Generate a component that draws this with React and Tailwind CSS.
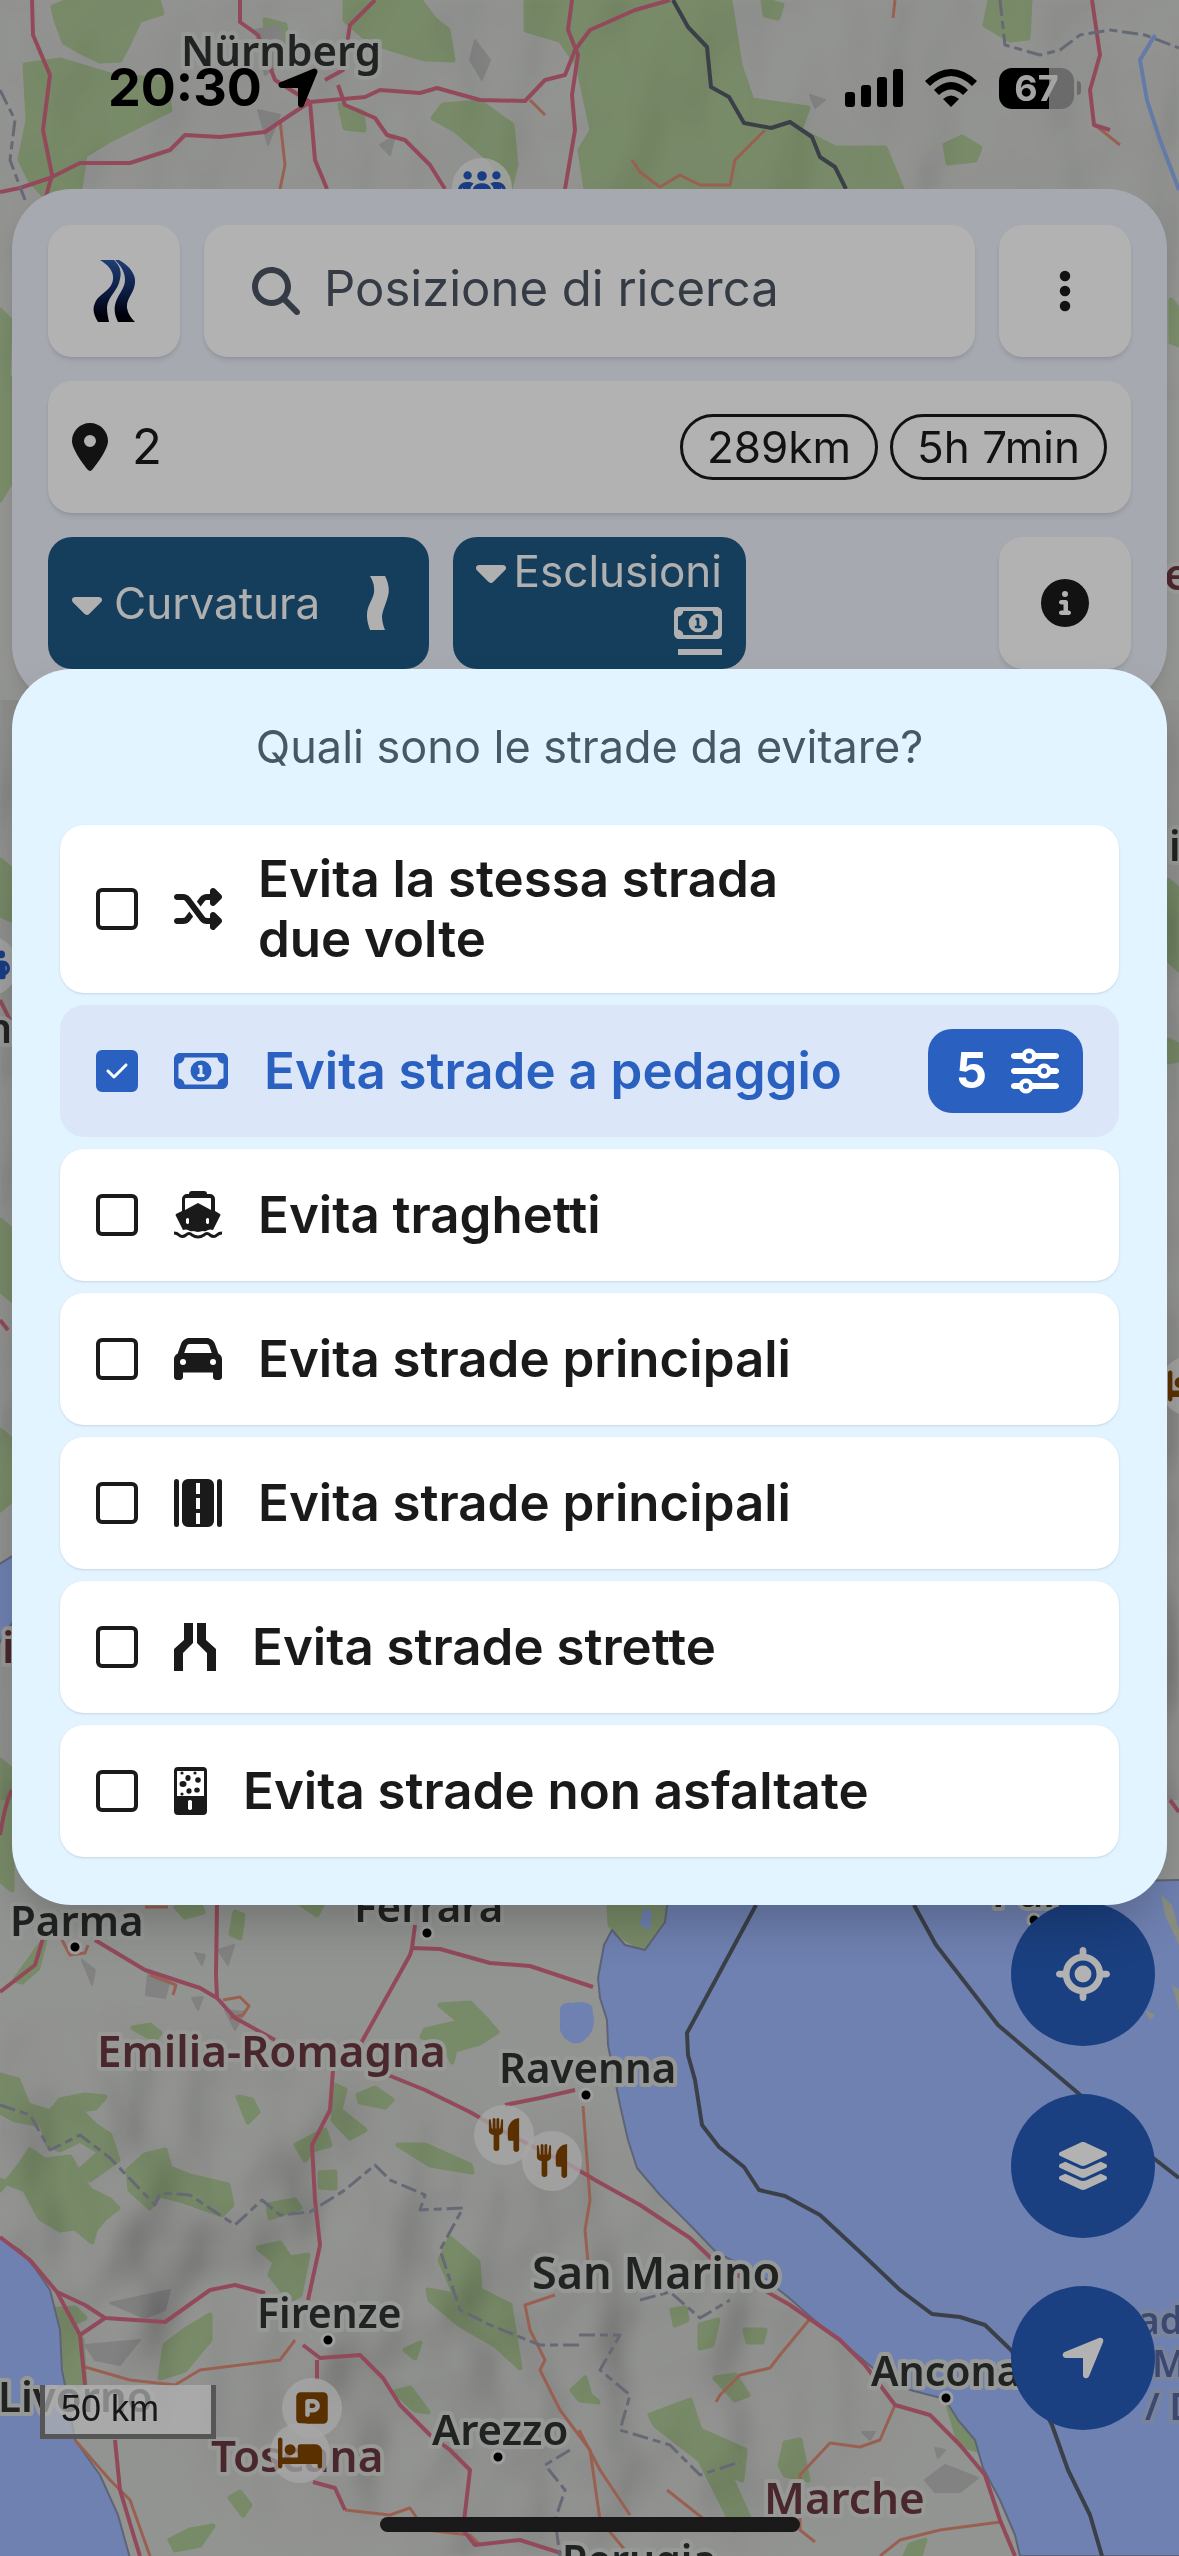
import { useState } from "react";
import {
	FaBed,
	FaCar,
	FaCaretDown,
	FaCheck,
	FaCircleInfo,
	FaEllipsisVertical,
	FaLayerGroup,
	FaLocationArrow,
	FaLocationCrosshairs,
	FaLocationDot,
	FaMagnifyingGlass,
	FaPeopleGroup,
	FaRegMoneyBill1,
	FaShuffle,
	FaSliders,
	FaSquareParking,
} from "react-icons/fa6";

function FerryIcon({ className }) {
	return (
		<svg viewBox="0 0 48 48" className={className} fill="currentColor">
			<path
				fillRule="evenodd"
				d="M15 3a3 3 0 0 1 3-3h12a3 3 0 0 1 3 3h3a5 5 0 0 1 5 5v12l5 3q1 1 0 2l-7 14q-3-1-5 0-3 2-5 1l-5 1-5-1q-2 1-5-1-2-1-5 0L2 25q-1-1 0-2l6-3V8a5 5 0 0 1 5-5h2zm-4 5v11l13-7 13 7V8q0-1-1-1H12q-1 0-1 1zm1 20v4q2 2 3 0v-4q-1-2-3 0zm20 0v4q2 2 3 0v-4q-1-2-3 0z"
			/>
			<path
				d="M0 42q3 0 5 2 3 3 7 0 3-3 6 0 6 4 12 0 3-3 6 0 4 3 7 0 2-2 5-2"
				fill="none"
				stroke="currentColor"
				strokeWidth="3"
			/>
		</svg>
	);
}

function MotorwayIcon({ className }) {
	return (
		<svg viewBox="0 0 48 48" className={className} fill="currentColor">
			<rect x="0" y="0" width="5" height="48" rx="2.500" />
			<rect x="43" y="0" width="5" height="48" rx="2.500" />
			<path
				fillRule="evenodd"
				d="M14 0h20a6 6 0 0 1 6 6v36a6 6 0 0 1-6 6H14a6 6 0 0 1-6-6V6a6 6 0 0 1 6-6zm8 4v11h4V4zm0 15v11h4V19zm0 15v11h4V34z"
			/>
		</svg>
	);
}

function NarrowIcon({ className }) {
	return (
		<svg viewBox="0 0 42 48" className={className} fill="currentColor">
			<path d="M10 0h9v20L9 30v18H0V26l10-9zM23 0h9v17l10 9v22h-9V30L23 20z" />
		</svg>
	);
}

function UnpavedIcon({ className }) {
	return (
		<svg viewBox="0 0 33 48" className={className} fill="currentColor">
			<path
				fillRule="evenodd"
				d="M4 0h25a4 4 0 0 1 4 4v40a4 4 0 0 1-4 4H4a4 4 0 0 1-4-4V4a4 4 0 0 1 4-4zM3 4v25h27V4zM14 34v8q2 2 4 0v-8q-2-2-4 0z"
			/>
			<circle cx="8" cy="6" r="1.600" />
			<circle cx="21" cy="6" r="1.600" />
			<circle cx="8" cy="27" r="1.600" />
			<ellipse cx="14" cy="11" rx="2.600" ry="3" />
			<ellipse cx="24" cy="13" rx="2.800" ry="2.800" />
			<ellipse cx="9" cy="17" rx="3.500" ry="3" />
			<ellipse cx="15" cy="24" rx="2.600" ry="2.800" />
			<ellipse cx="23" cy="23" rx="2.800" ry="2.600" />
		</svg>
	);
}

// Fork and knife side by side, facing each other
function RestaurantIcon({ size, ...props }) {
	return (
		<svg viewBox="0 0 34 36" width={size} height={size} fill="currentColor" {...props}>
			<path d="M1 2q1-2 2 0l1 9h1V1q1-2 3 0v10h1V1q2-2 3 0v10h1l1-9q1-2 2 0v12q0 3-4 4v15q-1 2-3 2t-3-2V18q-5-1-5-4z" />
			<path d="M33 0v34q-1 2-3 2t-3-2V24h-5q-1-1-1-3V12Q23 1 33 0z" />
		</svg>
	);
}

function Logo() {
	return (
		<svg viewBox="0 0 42 62" className="h-[62px] w-[42px]">
			<defs>
				<linearGradient id="logo" x1="0" y1="0" x2="0" y2="1">
					<stop offset="0" stopColor="#2c5aa6" />
					<stop offset="0.450" stopColor="#152f6b" />
					<stop offset="0.900" stopColor="#000010" />
				</linearGradient>
			</defs>
			<path
				fill="url(#logo)"
				d="M7 0h14c5 5 8 10 6 19-2 12-12 17-13 28 0 6 1 10 2 15H5C1 55-1 50 2 43 6 33 19 31 20 19 21 11 15 5 7 0z"
			/>
			<path
				fill="url(#logo)"
				d="M22 0h4c9 5 17 13 16 23-1 11-9 15-8 25 1 6 4 10 8 14H25c-3-6-4-11-3-17 2-10 10-16 10-25 0-8-4-14-10-20z"
			/>
		</svg>
	);
}

function CurveIcon() {
	return (
		<svg viewBox="0 0 22 54" className="h-[54px] w-[22px]" fill="currentColor">
			<path d="M3 0h15c3 6 5 13 3 20-2 8-5 13-6 20 0 5 1 9 3 14H3C0 46-1 39 1 32c3-8 7-13 6-20 0-5-2-8-4-12z" />
		</svg>
	);
}

function StatusBar() {
	return (
		<div className="relative z-30 flex h-[177px] items-start justify-between pt-[57px] pr-[98px] pl-[108px] text-black">
			<div className="flex items-center gap-3">
				<span className="text-[52px] leading-[62px] font-bold">20:30</span>
				<FaLocationArrow className="size-12" />
			</div>
			<div className="flex h-[62px] items-center gap-[22px]">
				<svg viewBox="0 0 58 38" className="h-[38px] w-[58px]">
					<rect x="0" y="23" width="10" height="15" rx="3" />
					<rect x="16" y="16" width="10" height="22" rx="3" />
					<rect x="32" y="8" width="10" height="30" rx="3" />
					<rect x="48" y="0" width="10" height="38" rx="3" />
				</svg>
				<svg viewBox="0 0 52 38" className="h-[38px] w-[52px]">
					<path d="M0 12Q26-12 52 12l-5 5Q26-3 5 17z" />
					<path d="M9 21Q26 5 43 21l-5 5Q26 15 14 26z" />
					<path d="M18 30q8-7 16 0l-8 8z" />
				</svg>
				<div className="flex items-center gap-[3px]">
					<span className="flex h-[41px] w-[75px] items-center justify-center rounded-[13px] bg-linear-to-r from-black from-67% to-[#6a6b6a] to-67% text-[36px] leading-[41px] font-bold text-[#a3a5a3]">
						67
					</span>
					<span className="h-[14px] w-1 rounded-r-full bg-[#6a6b6a]" />
				</div>
			</div>
		</div>
	);
}

const woods = [
	"M53 7L70 0H158L162 13 140 20 128 45 120 60 100 61 83 53 64 42 56 20z",
	"M345 0H420L435 20 448 30 453 60 425 59 395 50 370 42 345 20z",
	"M526 0H675L730 0 740 65 752 100 808 108 800 130 835 148 885 148 902 189H586L580 150 592 130 578 65 560 40 526 30z",
	"M25 65L60 60 110 75 165 80 170 110 140 125 110 140 85 155 80 189 48 200 30 180 20 160 28 120z",
	"M443 105L480 102 512 125 516 165 510 189 490 160 455 130 433 118z",
	"M990 0H1030L1028 38 1010 40 985 25z",
	"M945 145L962 137 980 148 975 160 948 163z",
	"M340 105L362 112 364 130 345 128z",
	"M265 20L285 25 290 65 270 68z",
	"M763 0L782 5 778 18 765 15z",
	"M0 310L10 320 8 380 0 390z",
	"M0 370L12 380V480L0 500z",
	"M1171 300L1179 310V345L1171 342z",
	"M0 860L12 870V920L0 915z",
	"M0 1220L12 1230V1300L0 1290z",
	"M1168 880L1179 890V970L1168 960z",
	"M1168 1040L1179 1045V1060L1168 1062z",
	"M0 1430L12 1440V1500L0 1510z",
	"M0 1760L12 1770V1890L0 1880z",
	"M176 1907L200 1904 203 1912 185 1917z",
	"M235 1912L243 1915 240 1938 231 1934z",
	"M302 1905L322 1905 317 1915z",
	"M40 1945L45 1940 38 1968 22 1982 15 1980z",
	"M133 2028L150 2025 160 2033 155 2040z",
	"M440 2005L470 2003 485 2018 497 2032 480 2043 455 2050 452 2062 445 2045 422 2037 425 2030 460 2022z",
	"M0 2075L18 2080 28 2105 50 2112 60 2100 85 2095 105 2097 95 2108 80 2110 95 2125 110 2135 118 2160 90 2180 80 2170 100 2152 80 2140 60 2150 48 2145 42 2125 15 2120 0 2112z",
	"M0 2190L20 2165 30 2150 45 2160 70 2157 80 2175 90 2190 110 2200 118 2208 105 2218 95 2230 92 2242 75 2228 60 2230 40 2218 25 2190 0 2180z",
	"M128 2170L145 2155 165 2150 170 2168 190 2176 228 2185 232 2205 222 2215 180 2200 160 2195 150 2208 130 2190z",
	"M238 2097L252 2100 258 2112 248 2122z",
	"M296 2145L315 2135 325 2130 330 2145 312 2150 305 2160z",
	"M335 2085L345 2090 340 2110 365 2130 350 2138 333 2120z",
	"M358 2095L375 2088 392 2100 385 2107 360 2102z",
	"M398 2145L425 2145 470 2165 472 2172 430 2165z",
	"M320 2173L335 2172 335 2188 320 2187z",
	"M268 2205L295 2200 300 2208 270 2218z",
	"M258 2248L280 2243 290 2258 308 2255 300 2295 290 2300 270 2275 275 2262z",
	"M210 2315L210 2340 185 2370 160 2378 165 2345 185 2330z",
	"M50 2310L75 2308 85 2318 70 2325 82 2340 85 2385H68L62 2340z",
	"M405 2350L420 2343 415 2358z",
	"M395 2392L410 2388 428 2412 415 2410z",
	"M450 2238L478 2262 480 2290 510 2305 520 2368 495 2345 460 2325 430 2300 428 2290 455 2295 440 2260z",
	"M572 2390L585 2378 590 2395 598 2402 580 2400z",
	"M170 2540L190 2530 213 2526 200 2545 175 2550z",
	"M230 2498L240 2492 250 2505 243 2515z",
	"M672 2310L685 2308 687 2320 675 2325z",
	"M700 2325L718 2320 712 2345 700 2348z",
	"M745 2330L765 2330 762 2342 748 2342z",
	"M715 2378L735 2375 748 2395 735 2400z",
	"M650 2415L690 2400 700 2430 745 2450 742 2480 730 2475 750 2520 735 2530 700 2460 655 2425z",
	"M785 2443L800 2440 808 2480 785 2475 780 2465z",
	"M948 2405L975 2425 978 2450 960 2445z",
	"M609 1905H668L662 1930 645 1950 625 1938 610 1925z",
	"M910 2545L925 2540 920 2556H905z",
];

const motorways = [
	"M32 0L33 35 50 75 43 130 52 175 45 200",
	"M0 192L20 188 50 178 80 163 130 163 170 150 185 135 220 137 265 132 290 115 310 102 365 97 380 90 420 93 437 88 480 100 525 101 545 80 565 75 575 50 590 30 635 10 670 0",
	"M375 0L350 25 343 70 325 80",
	"M572 0L568 30 578 55 572 95 575 130 565 189",
	"M240 0L240 22 258 35 275 80 310 102 315 160 327 189",
	"M338 85L345 105 375 118 387 135 405 140 430 165 445 189",
	"M1092 0L1100 55 1090 90 1094 125 1110 130",
	"M0 1992L35 1965 47 1925",
	"M95 1940L145 1970 200 1988 217 1998 235 2018 275 2040",
	"M217 1905L216 1975 217 1998",
	"M360 2045L410 1955 412 1948 440 1949 490 1963 530 1966 560 1976 593 1987",
	"M412 1948L415 1925",
	"M388 2075L425 2090 470 2112 510 2135 570 2165 595 2180 640 2205 690 2238 715 2262 790 2305 840 2340 865 2365 895 2405 930 2415 960 2445 985 2475 1000 2520 1015 2556",
	"M333 2070L330 2110 312 2145 315 2200 320 2245 308 2300",
	"M505 2105L540 2098 575 2090",
	"M0 2237L30 2260 57 2292 85 2305 105 2318 165 2322 210 2290 235 2285 265 2293",
	"M57 2292L80 2335 85 2385",
	"M80 2335L105 2318",
	"M303 2345L320 2358 360 2355 383 2378 400 2405 430 2435 450 2450 470 2470 463 2530",
	"M317 2360L317 2380",
	"M115 2440L120 2490 135 2540 140 2556",
	"M313 2482L335 2488 345 2510",
	"M463 2530L475 2545 520 2540 570 2556",
	"M0 1835Q6 1800 12 1790",
	"M0 1320L8 1330M0 1000L10 1020M1170 1800L1179 1812",
];

const mainRoads = [
	"M280 120L285 165 280 189",
	"M765 130L750 145 735 160 730 185 700 185 680 175 660 187 640 172 632 160",
	"M530 100L545 115M895 0L893 18M1095 125L1120 145",
	"M62 1940L70 1955 85 1953 88 1945",
	"M145 1907L168 1907M150 1975L176 1985 173 1995",
	"M223 2000L240 1997 249 2006 243 2015 230 2018",
	"M583 2106L590 2200 585 2230 588 2262",
	"M85 2367L130 2380 175 2385 200 2370 280 2360 295 2340",
	"M555 2295L525 2305 530 2330 545 2360 540 2370 560 2410 590 2450 600 2520 630 2556",
	"M809 2320L780 2355 770 2368 740 2375 720 2395 716 2402",
	"M895 2405L880 2440 860 2447 830 2443 800 2475 800 2530 815 2542",
	"M345 2510L390 2515 410 2508 425 2530 470 2535 480 2545",
	"M75 2440L110 2480 130 2500 150 2556",
	"M1000 2522L940 2530 900 2540 880 2556",
	"M579 2430L600 2470 630 2515",
	"M667 2490L705 2520",
];

const borders = [
	"M0 90L15 120 10 160 25 200",
	"M1000 0L1005 45 1040 55 1060 50 1080 35 1110 30 1145 35 1179 48",
	"M0 2105L30 2115 50 2150 80 2135 110 2158 155 2205 160 2193 190 2195 235 2225 262 2200 280 2215 310 2212 345 2190 375 2165 390 2180 425 2195 420 2210 463 2208 440 2250 450 2280 460 2310 490 2325 540 2345 579 2345",
	"M640 2300L670 2292 700 2318 730 2300",
	"M579 2335L620 2335 600 2370 630 2395 620 2430 670 2445 700 2475 740 2462",
	"M570 2450L545 2465 565 2490 555 2520 560 2556",
];

const towns = [
	{ name: "Nürnberg", x: 181, y: 66, size: 42 },
	{ name: "Parma", x: 10, y: 1936, size: 42, dot: [75, 1947] },
	{ name: "Ferrara", x: 354, y: 1922, size: 42, dot: [427, 1933] },
	{ name: "Ravenna", x: 499, y: 2083, size: 42, dot: [586, 2095] },
	{ name: "San Marino", x: 532, y: 2289, size: 45 },
	{ name: "Firenze", x: 257, y: 2328, size: 41, dot: [328, 2340] },
	{ name: "Livorno", x: -2, y: 2412, size: 42 },
	{ name: "Arezzo", x: 432, y: 2445, size: 42, dot: [498, 2457] },
	{ name: "Ancona", x: 871, y: 2386, size: 41, dot: [946, 2398] },
	{ name: "Perugia", x: 562, y: 2575, size: 41 },
	{ name: "Pula", x: 992, y: 1907, size: 41, dot: [1034, 1920] },
	{ name: "n", x: -14, y: 1043, size: 41 },
	{ name: "i", x: 1169, y: 861, size: 41 },
];

const regions = [
	{ name: "Emilia-Romagna", x: 97, y: 2067 },
	{ name: "Toscana", x: 211, y: 2472 },
	{ name: "Marche", x: 764, y: 2514 },
	{ name: "e", x: 1164, y: 590 },
	{ name: "i", x: 2, y: 1663 },
];

function Label({ children, ...props }) {
	return (
		<text
			fontWeight="600"
			stroke="#d9dbd9"
			strokeWidth="8"
			strokeLinejoin="round"
			paintOrder="stroke"
			{...props}
		>
			{children}
		</text>
	);
}

function Pin({ x, y, color = "#824500", size = 34, icon: Icon }) {
	return (
		<g>
			<circle cx={x} cy={y} r="30" fill="#efefef" opacity="0.750" />
			<Icon x={x - size / 2} y={y - size / 2} size={size} color={color} />
		</g>
	);
}

function MapBackground() {
	return (
		<svg
			viewBox="0 0 1179 2556"
			preserveAspectRatio="xMidYMid slice"
			className="absolute inset-0 h-full w-full font-['Noto_Sans',sans-serif]"
			aria-label="Mappa"
		>
			<defs>
				<filter id="relief" x="0" y="0" width="100%" height="100%">
					<feTurbulence
						type="fractalNoise"
						baseFrequency="0.012 0.008"
						numOctaves="2"
						seed="8"
					/>
					<feDiffuseLighting surfaceScale="30" lightingColor="#ffffff">
						<feDistantLight azimuth="215" elevation="60" />
					</feDiffuseLighting>
					<feGaussianBlur stdDeviation="3" />
				</filter>
				<radialGradient id="fade">
					<stop offset="0.400" stopColor="#ffffff" />
					<stop offset="1" stopColor="#ffffff" stopOpacity="0" />
				</radialGradient>
				<mask id="mountains">
					<ellipse cx="160" cy="2220" rx="400" ry="220" fill="url(#fade)" />
					<ellipse cx="540" cy="2360" rx="400" ry="260" fill="url(#fade)" />
					<rect x="0" y="700" width="1179" height="1100" fill="#ffffff" />
					<rect x="0" y="0" width="1179" height="400" fill="#ffffff" opacity="0.300" />
				</mask>
			</defs>
			<rect width="1179" height="2556" fill="#d2d4d1" />
			<g fill="#adc796" strokeLinejoin="round" stroke="#adc796" strokeWidth="5">
				{woods.map((d) => (
					<path key={d} d={d} />
				))}
			</g>
			<g fill="#b9bab9" stroke="#b9bab9" strokeWidth="2" strokeLinejoin="round">
				<path d="M255 30L280 25 285 60 265 75zM475 40L490 60 482 80 470 60z" />
				<path d="M810 95L825 100 815 108zM380 145L395 135 390 155zM258 110L280 115 268 145z" />
				<path d="M148 1973L170 1980 165 1998 146 1995zM218 1950L234 1945 228 1965zM192 1998L203 1997 198 2010z" />
				<path d="M82 1960L95 1970 92 1985zM195 1953L205 1955 202 1965zM225 2010L245 2012 235 2030z" />
				<path d="M925 2480L945 2465 978 2478 960 2492 935 2492zM862 2432L875 2432 870 2440zM935 2448L945 2450 938 2458z" />
				<path d="M110 2303L170 2290 165 2310 145 2318zM85 2345L140 2340 120 2365 95 2360z" />
			</g>
			<g style={{ mixBlendMode: "multiply" }} mask="url(#mountains)">
				<rect width="1179" height="2556" filter="url(#relief)" opacity="0.550" />
			</g>
			<g fill="#9fb9fe" stroke="#8790a8" strokeWidth="2" strokeLinejoin="round">
				<path d="M669 1890L665 1922 645 1950 625 1945 612 1930 604 1945 598 1978 600 1998 607 2020 608 2045 615 2080 620 2105 628 2140 637 2168 660 2195 690 2225 716 2252 760 2275 788 2297 820 2325 860 2357 875 2370 910 2390 945 2399 958 2420 975 2440 983 2468 1000 2500 1015 2535 1020 2556H1181V1880z" />
				<path d="M-2 2237L20 2250 35 2268 50 2290 60 2330 62 2370 68 2400 75 2440 100 2475 118 2515 130 2558H-2z" />
				<path d="M-2 1565L14 1555V1620L-2 1645z" />
			</g>
			<g fill="#9fb9fe">
				<path d="M560 2008Q562 2002 572 2003 585 2000 592 2006L594 2020Q594 2035 580 2043 565 2045 560 2030z" />
				<path d="M643 1908L652 1912 650 1930 640 1925z" />
			</g>
			<path
				d="M1161 1895L1172 1905 1179 1930V1945L1165 1915zM1172 1985L1179 1990V2010zM1145 2010L1155 2015 1150 2020z"
				fill="#c6ccb8"
			/>
			<path
				d="M1155 35L1140 60 1147 100 1160 140 1179 190"
				fill="none"
				stroke="#8fb0ee"
				strokeWidth="4"
			/>
			<g fill="none" strokeLinejoin="round">
				<g stroke="#dc8a76" strokeWidth="3">
					{mainRoads.map((d) => (
						<path key={d} d={d} />
					))}
				</g>
				<g stroke="#d26a82" strokeWidth="4">
					{motorways.map((d) => (
						<path key={d} d={d} />
					))}
				</g>
				<g stroke="#9495a8" strokeWidth="3" strokeDasharray="16 5 8 5">
					{borders.map((d) => (
						<path key={d} d={d} />
					))}
				</g>
				<g stroke="#555c68" strokeWidth="4">
					<path d="M673 0L688 27 707 47 711 87 729 97 744 123 771 128 790 122 812 137 820 157 835 167 846 189" />
					<path d="M756 1905L687 2033 688 2055 695 2080 702 2125 719 2147 744 2167 759 2190 785 2196 820 2215 860 2252 900 2290 932 2314 960 2317 985 2325 1011 2350 1030 2380 1052 2425 1068 2470 1090 2515 1102 2556" />
					<path d="M914 1905L936 1945 998 2025 1078 2093 1130 2140 1179 2178" />
				</g>
			</g>
			<g fontSize="37">
				<Label x="1138" y="2334" stroke="#aebcdf" fill="#5668a0">
					ad
				</Label>
				<Label x="1152" y="2377" stroke="#aebcdf" fill="#5668a0">
					M
				</Label>
				<Label x="1145" y="2420" stroke="#aebcdf" fill="#5668a0">
					/ D
				</Label>
			</g>
			{towns.map(({ name, x, y, size, dot }) => (
				<g key={name}>
					<Label x={x} y={y} fontSize={size} fill="#2f3332">
						{name}
					</Label>
					{dot && (
						<circle
							cx={dot[0]}
							cy={dot[1]}
							r="6"
							fill="#000000"
							stroke="#e4e4e4"
							strokeWidth="3"
						/>
					)}
				</g>
			))}
			{regions.map(({ name, x, y }) => (
				<Label key={name + y} x={x} y={y} fontSize="44" fill="#6b393f">
					{name}
				</Label>
			))}
			<Pin x={482} y={188} size={48} color="#2458bd" icon={FaPeopleGroup} />
			<Pin x={-12} y={966} size={44} color="#2458bd" icon={FaPeopleGroup} />
			<Pin x={1190} y={1386} size={44} icon={FaBed} />
			<Pin x={504} y={2135} icon={RestaurantIcon} />
			<Pin x={552} y={2161} icon={RestaurantIcon} />
			<Pin x={312} y={2408} size={36} icon={FaSquareParking} />
			<Pin x={300} y={2453} size={44} icon={FaBed} />
		</svg>
	);
}

function SearchPanel() {
	return (
		<section className="mx-3 mt-3 flex flex-col gap-6 rounded-[60px] bg-[#eff3fd] p-9 text-[44px] text-[#1a1a1a] shadow-lg">
			<div className="flex h-33 gap-6">
				<a
					href="#home"
					aria-label="Home"
					className="flex w-33 items-center justify-center rounded-3xl bg-white shadow-md"
				>
					<Logo />
				</a>
				<label className="flex min-w-0 flex-1 items-center gap-6 rounded-3xl bg-white px-12 text-[#4b5563] shadow-md">
					<FaMagnifyingGlass className="size-12 shrink-0" />
					<input
						type="search"
						aria-label="Posizione di ricerca"
						placeholder="Posizione di ricerca"
						className="w-full min-w-0 pb-1 text-[49px] outline-none placeholder:text-[#4b5563]"
					/>
				</label>
				<button
					aria-label="Menu"
					className="flex w-33 items-center justify-center rounded-3xl bg-white shadow-md"
				>
					<FaEllipsisVertical className="size-12" />
				</button>
			</div>
			<div className="flex h-33 items-center gap-3 rounded-3xl bg-white px-6 shadow-md">
				<FaLocationDot className="h-12 w-9" />
				<span className="flex-1 pl-3 text-[49px]">2</span>
				<span className="flex h-[66px] items-center rounded-full border-3 px-6">289km</span>
				<span className="flex h-[66px] items-center rounded-full border-3 px-6">5h 7min</span>
			</div>
			<div className="flex h-33 gap-6 text-[#fcfcfc]">
				<button className="flex w-[381px] items-center gap-3 rounded-3xl bg-[#1f5a84] px-6">
					<FaCaretDown className="h-12 w-[30px]" />
					<span className="flex-1 text-left">Curvatura</span>
					<span className="pr-4">
						<CurveIcon />
					</span>
				</button>
				<button className="flex w-[293px] flex-col items-end overflow-hidden rounded-3xl bg-[#1f5a84] px-6 pt-1">
					<span className="flex items-center gap-2 leading-[60px]">
						<FaCaretDown className="h-12 w-[30px]" />
						Esclusioni
					</span>
					<FaRegMoneyBill1 className="h-[44px] w-12" />
					<span className="mt-1 h-[6px] w-11 bg-[#fcfcfc]" />
				</button>
				<button
					aria-label="Informazioni"
					className="ml-auto flex w-33 items-center justify-center rounded-3xl bg-white text-[#1a1a1a] shadow-md"
				>
					<FaCircleInfo className="size-12" />
				</button>
			</div>
		</section>
	);
}

const options = [
	{ id: "same", label: "Evita la stessa strada\ndue volte", icon: FaShuffle, size: "size-12" },
	{ id: "toll", label: "Evita strade a pedaggio", icon: FaRegMoneyBill1, size: "h-12 w-[54px]", count: 5 },
	{ id: "ferry", label: "Evita traghetti", icon: FerryIcon, size: "size-12" },
	{ id: "main", label: "Evita strade principali", icon: FaCar, size: "size-12" },
	{ id: "motorway", label: "Evita strade principali", icon: MotorwayIcon, size: "size-12" },
	{ id: "narrow", label: "Evita strade strette", icon: NarrowIcon, size: "h-12 w-[42px]" },
	{ id: "unpaved", label: "Evita strade non asfaltate", icon: UnpavedIcon, size: "h-12 w-[33px]" },
];

function OptionRow({ option, checked, onToggle }) {
	const Icon = option.icon;

	return (
		<li
			className={`${
				checked ? "bg-[#dce6f9] text-[#2a60c0]" : "bg-white text-[#1a1a1a] shadow-sm"
			} flex min-h-33 items-center rounded-3xl px-9 py-6`}
		>
			<label className="flex flex-1 cursor-pointer items-center gap-9">
				<span className="grid shrink-0 place-items-center">
					<input
						type="checkbox"
						checked={checked}
						onChange={onToggle}
						className="col-start-1 row-start-1 size-[42px] appearance-none rounded-md border-4 border-[#1a1a1a] bg-white checked:border-[#2a60c0] checked:bg-[#2a60c0]"
					/>
					{checked && (
						<FaCheck className="pointer-events-none col-start-1 row-start-1 size-6 text-white" />
					)}
				</span>
				<Icon className={`${option.size} shrink-0`} />
				<span className="text-[51px] leading-[60px] font-semibold whitespace-pre-line">
					{option.label}
				</span>
			</label>
			{checked && option.count && (
				<button
					aria-label="Impostazioni pedaggio"
					className="flex h-21 items-center gap-6 rounded-3xl bg-[#2a60c0] px-6 text-[49px] font-bold text-white"
				>
					<span className="pl-1">{option.count}</span>
					<FaSliders className="size-12" />
				</button>
			)}
		</li>
	);
}

function AvoidDialog() {
	const [selected, setSelected] = useState(["toll"]);

	const toggle = (id) => {
		setSelected((previous) =>
			previous.includes(id)
				? previous.filter((element) => element != id)
				: [...previous, id]
		);
	};

	return (
		<div
			role="dialog"
			aria-labelledby="avoid-title"
			className="relative z-20 mx-3 -mt-9 rounded-[60px] bg-[#e2f4ff] p-12 shadow-2xl"
		>
			<h2
				id="avoid-title"
				className="mb-12 text-center text-[45px] leading-[60px] text-[#475765]"
			>
				Quali sono le strade da evitare?
			</h2>
			<ul className="flex flex-col gap-3">
				{options.map((option) => (
					<OptionRow
						key={option.id}
						option={option}
						checked={selected.includes(option.id)}
						onToggle={() => toggle(option.id)}
					/>
				))}
			</ul>
		</div>
	);
}

function MapControls() {
	const controls = [
		{ label: "La mia posizione", icon: FaLocationCrosshairs, size: "size-[54px]" },
		{ label: "Livelli", icon: FaLayerGroup, size: "size-[54px]" },
		{ label: "Naviga", icon: FaLocationArrow, size: "size-[50px]" },
	];

	return (
		<div className="absolute right-6 bottom-[126px] flex flex-col gap-12">
			{controls.map(({ label, icon: Icon, size }) => (
				<button
					key={label}
					aria-label={label}
					className="flex size-36 items-center justify-center rounded-full bg-[#285cb9] text-white"
				>
					<Icon className={size} />
				</button>
			))}
		</div>
	);
}

export default function App() {
	return (
		<main className="relative min-h-screen overflow-hidden font-['Inter',sans-serif]">
			<MapBackground />
			<MapControls />
			<div className="absolute bottom-[117px] left-10 h-[54px] w-44 border-5 border-t-0 border-[#7a7c7a] bg-white/70 pl-4 font-['Liberation_Sans',sans-serif] text-[36px] leading-[48px] text-[#222]">
				50 km
			</div>
			<StatusBar />
			<div className="relative">
				<SearchPanel />
			</div>
			<div className="absolute inset-0 z-10 bg-black/30" />
			<AvoidDialog />
			<div className="absolute bottom-6 left-1/2 z-30 h-[15px] w-[420px] -translate-x-1/2 rounded-full bg-[#1a1a1a]" />
		</main>
	);
}
